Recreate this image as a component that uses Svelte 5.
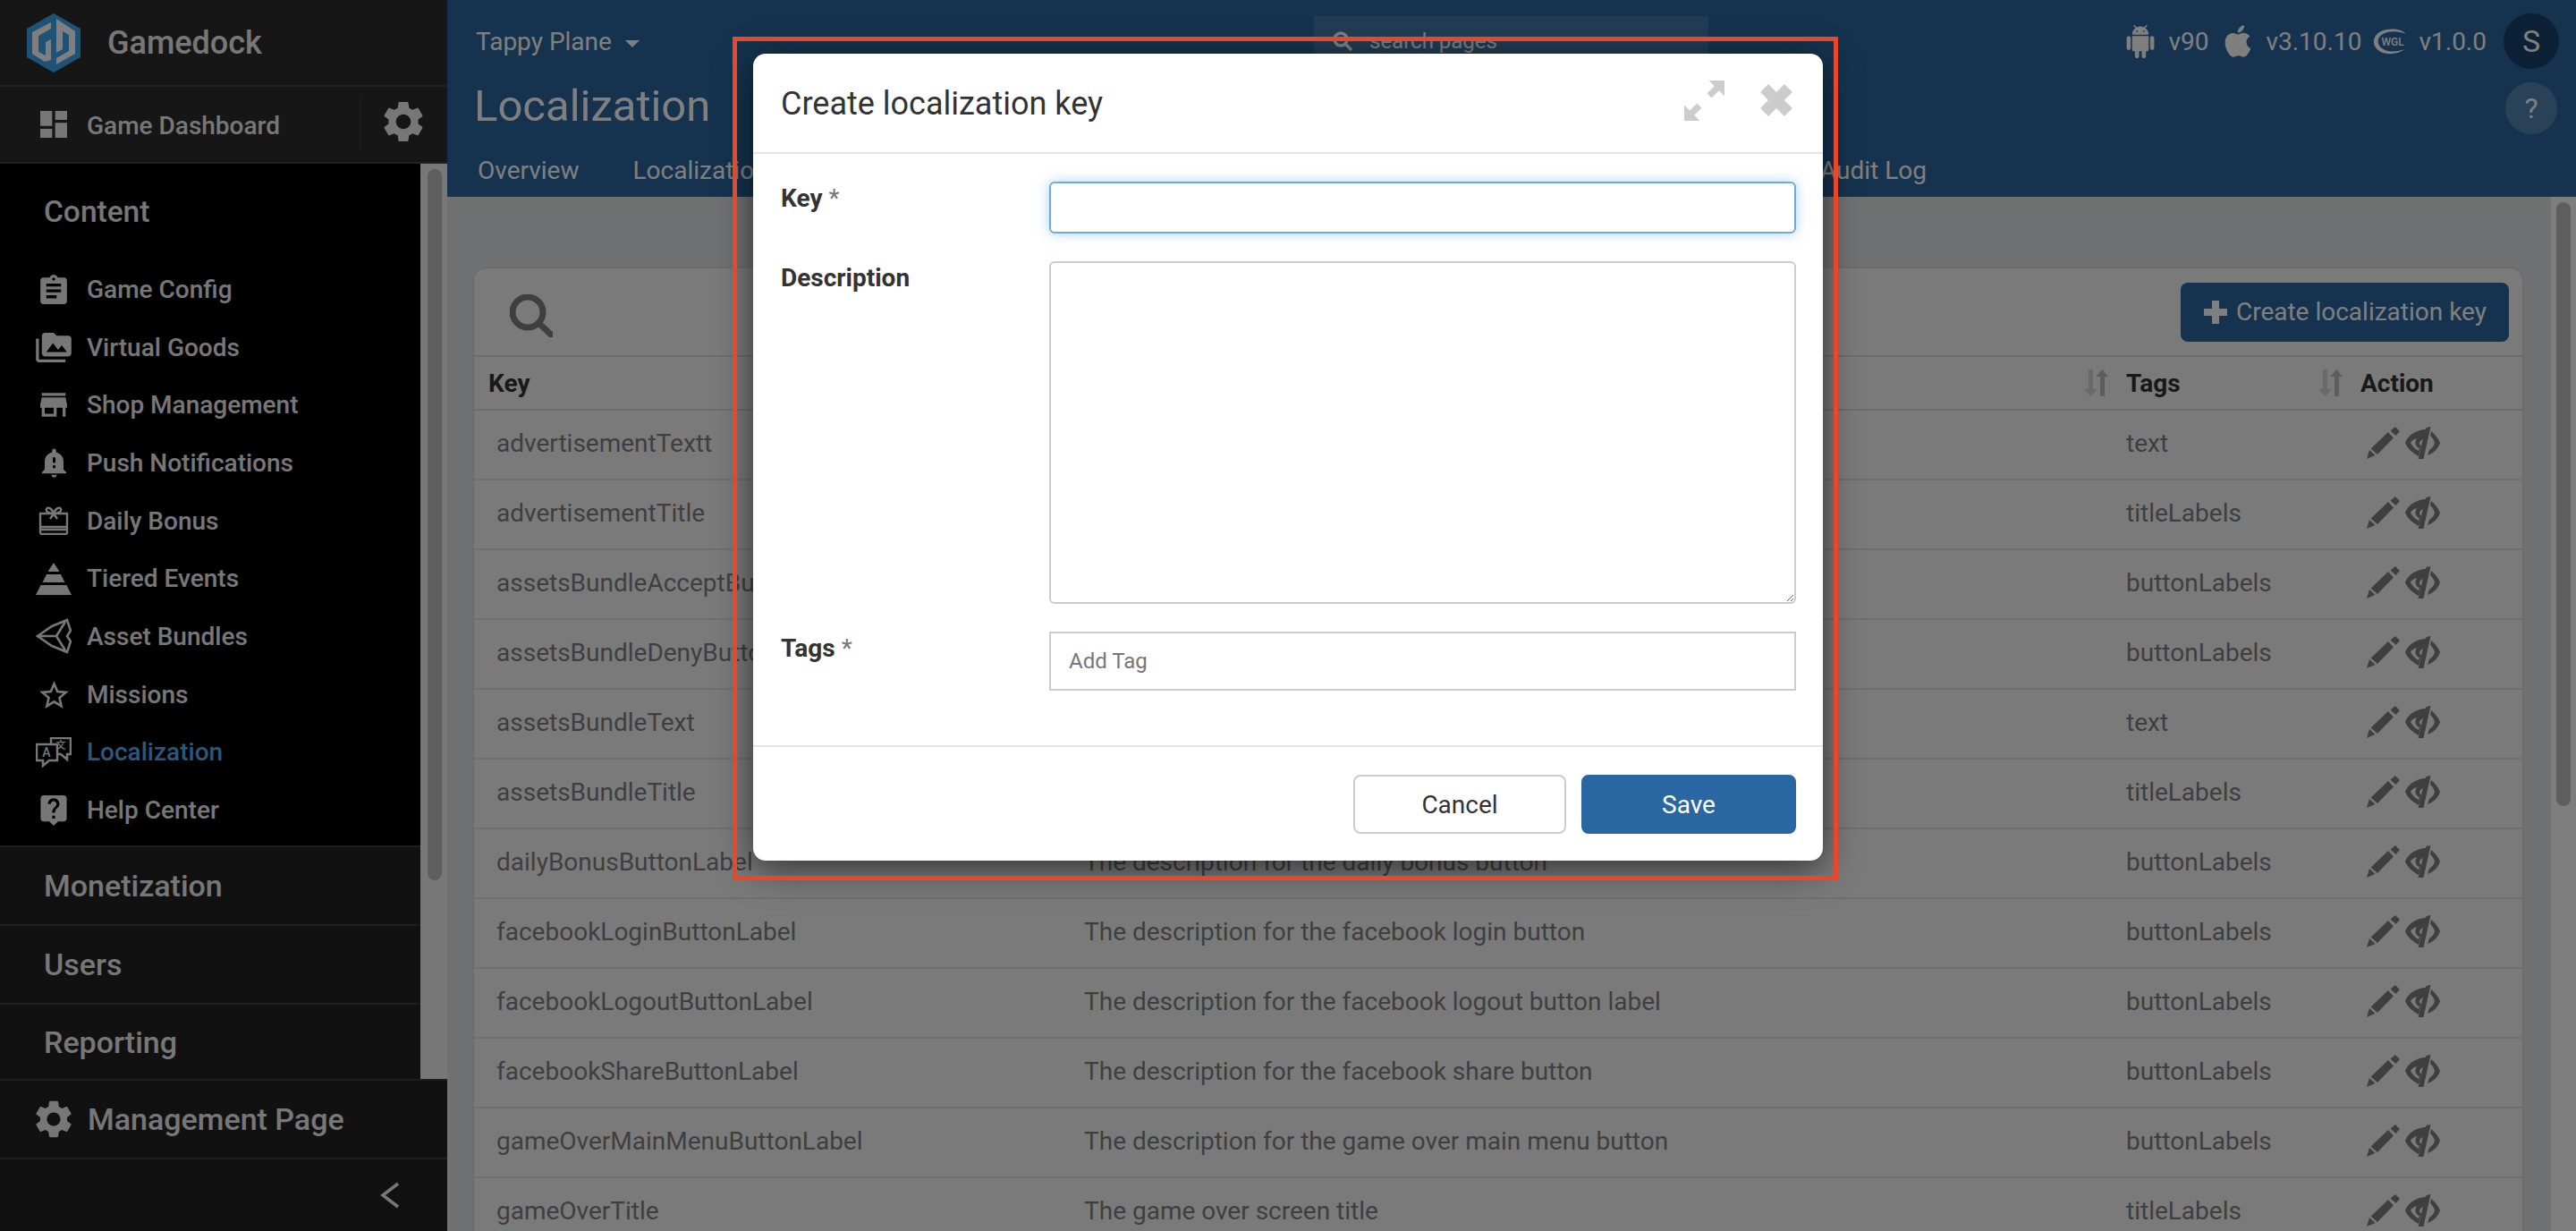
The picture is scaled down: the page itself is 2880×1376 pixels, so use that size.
<script>
  const nav = [
    { label: 'Game Config', vb: '3 1 18 20', d: 'M19 3h-4.18C14.4 1.84 13.3 1 12 1c-1.3 0-2.4.84-2.82 2H5c-1.1 0-2 .9-2 2v14c0 1.1.9 2 2 2h14c1.1 0 2-.9 2-2V5c0-1.1-.9-2-2-2zm-7 0c.55 0 1 .45 1 1s-.45 1-1 1-1-.45-1-1 .45-1 1-1zm2 14H7v-2h7v2zm3-4H7v-2h10v2zm0-4H7V7h10v2z', w: 30, h: 33 },
    { label: 'Virtual Goods', vb: '0 2 24 20', d: 'M2 6H0v5h.01L0 20c0 1.1.9 2 2 2h18v-2H2V6zm20-2h-8l-2-2H6c-1.1 0-1.99.9-1.99 2L4 16c0 1.1.9 2 2 2h16c1.1 0 2-.9 2-2V6c0-1.1-.9-2-2-2zM7 15l4.500-6 3.500 4.510 2.500-3.010L21 15H7z', w: 40, h: 33 },
    { label: 'Shop Management', vb: '3 4 18 16', d: 'M20 4H4v2h16V4zm1 10v-2l-1-5H4l-1 5v2h1v6h10v-6h4v6h2v-6h1zm-9 4H6v-4h6v4z', w: 30, h: 27 },
    { label: 'Push Notifications', vb: '3 1.5 18 21.5', d: 'M12 23c1.100 0 1.990-.89 1.990-1.990h-3.980c0 1.100.89 1.990 1.990 1.990zm7-6v-6c0-3.350-2.360-6.150-5.500-6.830V3c0-.83-.67-1.500-1.500-1.500s-1.500.67-1.500 1.500v1.170C7.360 4.850 5 7.650 5 11v6l-2 2v1h18v-1l-2-2zm-6-1h-2v-2h2v2zm0-4h-2V8h2v4z', w: 27, h: 33 },
    { label: 'Daily Bonus', vb: '0 0 34 32', stroke: 2.4, d: 'M2 8h30v21a2 2 0 0 1-2 2H4a2 2 0 0 1-2-2z M2 23h30 M2 26h30 M17 8C12 8 8 6 9 3C10 0 15 2 17 8C19 2 24 0 25 3C26 6 22 8 17 8M17 8l-4 6M17 8l4 6', w: 34, h: 32 },
    { label: 'Tiered Events', vb: '0 0 40 36', d: 'M20 0l6.500 10h-13zM12 13h16l4.500 9h-25zM5.500 25h29l5.500 11H0z', w: 40, h: 36 },
    { label: 'Asset Bundles', vb: '0 0 40 40', stroke: 2.6, d: 'M2 20L18 9 35 2l4 12-4 6 4 6-4 12-17-7zM2 20h21M23 20l10-16M23 20l10 16', w: 40, h: 40 },
    { label: 'Missions', vb: '2 2 20 19', d: 'M22 9.240l-7.190-.62L12 2 9.190 8.630 2 9.240l5.460 4.730L5.820 21 12 17.270 18.180 21l-1.630-7.030L22 9.240zM12 15.400l-3.760 2.270 1-4.280-3.320-2.880 4.380-.38L12 6.100l1.710 4.040 4.380.38-3.320 2.880 1 4.280L12 15.400z', w: 33, h: 31 },
    { label: 'Localization', translate: true, active: true },
    { label: 'Help Center', vb: '3 2 18 21', d: 'M19 2H5c-1.110 0-2 .9-2 2v14c0 1.100.89 2 2 2h4l3 3 3-3h4c1.100 0 2-.9 2-2V4c0-1.100-.9-2-2-2zm-6 16h-2v-2h2v2zm2.070-7.750l-.9.92C13.450 11.900 13 12.500 13 14h-2v-.5c0-1.100.45-2.100 1.170-2.830l1.240-1.260c.37-.36.59-.86.59-1.410 0-1.100-.9-2-2-2s-2 .9-2 2H8c0-2.210 1.790-4 4-4s4 1.790 4 4c0 .88-.36 1.680-.93 2.250z', w: 30, h: 34 }
  ];

  const gear = 'M19.14 12.94c.04-.3.06-.61.06-.94 0-.32-.02-.64-.07-.94l2.03-1.58c.18-.14.23-.41.12-.61l-1.92-3.32c-.12-.22-.37-.29-.59-.22l-2.39.96c-.5-.38-1.03-.7-1.62-.94l-.36-2.54c-.04-.24-.24-.41-.48-.41h-3.84c-.24 0-.43.17-.47.41l-.36 2.54c-.59.24-1.13.57-1.62.94l-2.39-.96c-.22-.08-.47 0-.59.22L2.74 8.87c-.12.21-.08.47.12.61l2.03 1.58c-.05.3-.09.63-.09.94s.02.64.07.94l-2.03 1.58c-.18.14-.23.41-.12.61l1.92 3.32c.12.22.37.29.59.22l2.39-.96c.5.38 1.03.7 1.62.94l.36 2.54c.05.24.24.41.48.41h3.84c.24 0 .44-.17.47-.41l.36-2.54c.59-.24 1.13-.56 1.62-.94l2.39.96c.22.08.47 0 .59-.22l1.92-3.32c.12-.22.07-.47-.12-.61l-2.01-1.58zM12 15.6c-1.98 0-3.6-1.62-3.6-3.6s1.62-3.6 3.6-3.6 3.6 1.62 3.6 3.6-1.62 3.6-3.6 3.6z';

  const rows = [
    ['advertisementTextt', 'The description for the advertisement text', 'text'],
    ['advertisementTitle', 'The description for the advertisement title', 'titleLabels'],
    ['assetsBundleAcceptButtonLabel', 'The description for the accept button', 'buttonLabels'],
    ['assetsBundleDenyButtonLabel', 'The description for the deny button', 'buttonLabels'],
    ['assetsBundleText', 'The description for the assets bundle text', 'text'],
    ['assetsBundleTitle', 'The description for the assets bundle title', 'titleLabels'],
    ['dailyBonusButtonLabel', 'The description for the daily bonus button', 'buttonLabels'],
    ['facebookLoginButtonLabel', 'The description for the facebook login button', 'buttonLabels'],
    ['facebookLogoutButtonLabel', 'The description for the facebook logout button label', 'buttonLabels'],
    ['facebookShareButtonLabel', 'The description for the facebook share button', 'buttonLabels'],
    ['gameOverMainMenuButtonLabel', 'The description for the game over main menu button', 'buttonLabels'],
    ['gameOverTitle', 'The game over screen title', 'titleLabels']
  ];
</script>

{#snippet sortIcon()}
  <svg class="sort" viewBox="0 0 28 30" aria-hidden="true">
    <path d="M6 0h5v22h5l-7.500 8L1 22h5z" opacity=".6" />
    <path d="M19 30h5V8h4L21.500 0 14 8h5z" />
  </svg>
{/snippet}

<div class="app">
  <aside class="sidebar">
    <div class="brand">
      <svg class="logo" viewBox="0 0 60 66" aria-hidden="true">
        <polygon points="30,0 60,17 60,49 30,66 0,49 0,17" fill="#3fa5ee" />
        <path fill="#fff" d="M27 10v7L13 25v18l8 4V32l6-3v23l-7 2-14-9V21zM33 6l21 14v25L33 57v-7l14-8V24l-7-4v20l-7 4z" />
      </svg>
      <span>Gamedock</span>
    </div>

    <div class="dash">
      <svg class="dash-icon" viewBox="3 3 18 18" aria-hidden="true"><path d="M3 13h8V3H3v10zm0 8h8v-6H3v6zm10 0h8V11h-8v10zm0-18v6h8V3h-8z" /></svg>
      <span class="dash-label">Game Dashboard</span>
      <div class="dash-gear">
        <svg viewBox="2.500 2 19 20" aria-hidden="true"><path d={gear} /></svg>
      </div>
    </div>

    <div class="side-scroll">
      <div class="side-inner">
        <section class="open-group">
          <h3>Content</h3>
          {#each nav as item}
            <div class="nav-item" class:active={item.active}>
              <span class="nav-icon">
                {#if item.translate}
                  <svg width="40" height="34" viewBox="0 0 40 34" aria-hidden="true">
                    <path class="line" d="M17 7V1h22v18h-4v6l-7-6h-3" />
                    <path class="line" d="M1 8h23v18H15l-7 6v-6H1z" />
                    <text x="12" y="22" class="glyph">A</text>
                    <text x="28" y="13" class="glyph small">文</text>
                  </svg>
                {:else if item.stroke}
                  <svg width={item.w} height={item.h} viewBox={item.vb} aria-hidden="true">
                    <path class="line" style:stroke-width={item.stroke} d={item.d} />
                  </svg>
                {:else}
                  <svg width={item.w} height={item.h} viewBox={item.vb} aria-hidden="true"><path d={item.d} /></svg>
                {/if}
              </span>
              <span>{item.label}</span>
            </div>
          {/each}
        </section>
        <div class="group g1">Monetization</div>
        <div class="group g1">Users</div>
        <div class="group g2">Reporting</div>
      </div>
      <div class="side-bar"><div class="side-thumb"></div></div>
    </div>

    <div class="manage">
      <svg viewBox="2.500 2 19 20" aria-hidden="true"><path d={gear} /></svg>
      <span>Management Page</span>
    </div>
    <div class="collapse">
      <svg viewBox="0 0 22 30" aria-hidden="true"><path d="M20 2L3 15l17 13" /></svg>
    </div>
  </aside>

  <main class="main">
    <header class="header">
      <div class="topbar">
        <div class="project">Tappy Plane <i class="caret"></i></div>
        <div class="search">
          <svg viewBox="0 0 24 24" aria-hidden="true"><circle cx="10" cy="10" r="7" /><path d="M15 15l7 7" /></svg>
          <span>search pages</span>
        </div>
        <div class="versions">
          <svg class="android" viewBox="2 0 20 24" aria-hidden="true"><path d="M6 18c0 .55.45 1 1 1h1v3.500c0 .83.67 1.500 1.500 1.500s1.500-.67 1.500-1.500V19h2v3.500c0 .83.67 1.500 1.500 1.500s1.500-.67 1.500-1.500V19h1c.55 0 1-.45 1-1V8H6v10zM3.500 8C2.670 8 2 8.670 2 9.500v7c0 .83.67 1.500 1.500 1.500S5 17.330 5 16.500v-7C5 8.670 4.330 8 3.500 8zm17 0c-.83 0-1.500.67-1.500 1.500v7c0 .83.67 1.500 1.500 1.500s1.500-.67 1.500-1.500v-7c0-.83-.67-1.500-1.500-1.500zm-4.970-5.840l1.300-1.300c.2-.2.2-.51 0-.71-.2-.2-.51-.2-.71 0l-1.480 1.480C13.850 1.230 12.950 1 12 1c-.96 0-1.860.23-2.660.63L7.850.15c-.2-.2-.51-.2-.71 0-.2.2-.2.51 0 .71l1.310 1.310C6.970 3.260 6 5.010 6 7h12c0-1.990-.97-3.750-2.470-4.840zM10 5H9V4h1v1zm5 0h-1V4h1v1z" /></svg>
          <span>v90</span>
          <svg class="apple" viewBox="3.500 2 17 20" aria-hidden="true"><path d="M18.710 19.500c-.83 1.240-1.710 2.450-3.050 2.470-1.340.03-1.770-.79-3.290-.79-1.530 0-2 .77-3.270.82-1.310.05-2.300-1.320-3.140-2.530C4.250 17 2.940 12.450 4.700 9.390c.87-1.520 2.430-2.480 4.120-2.510 1.280-.02 2.500.87 3.290.87.78 0 2.260-1.070 3.810-.91.65.03 2.470.26 3.640 1.980-.09.06-2.170 1.280-2.150 3.810.03 3.020 2.650 4.030 2.680 4.040-.03.07-.42 1.440-1.380 2.830M13 3.500c.73-.83 1.940-1.460 2.940-1.500.13 1.170-.34 2.350-1.040 3.190-.69.85-1.830 1.510-2.950 1.420-.15-1.150.41-2.350 1.050-3.110z" /></svg>
          <span>v3.10.10</span>
          <svg class="wgl" viewBox="0 0 40 30" aria-hidden="true">
            <path d="M38 7C32 1 20 0 10 4 0 9-1 20 8 26c8 5 20 4 29-2-9 3-20 4-26-1C5 18 5 11 12 7c8-4 18-3 26 0z" />
            <text x="23" y="20" text-anchor="middle">WGL</text>
          </svg>
          <span>v1.0.0</span>
        </div>
        <div class="avatar">S</div>
      </div>
      <div class="titlebar">
        <h1>Localization</h1>
        <div class="help">?</div>
      </div>
      <nav class="tabs">
        <span>Overview</span>
        <span>Localization</span>
        <span>Languages</span>
        <span class="last">Audit Log</span>
      </nav>
    </header>

    <div class="content">
      <div class="content-inner">
        <div class="card">
          <div class="toolbar">
            <svg class="tool-search" viewBox="0 0 48 48" aria-hidden="true"><circle cx="20" cy="20" r="17" /><path d="M32 32l14 13" /></svg>
            <button class="create">
              <svg viewBox="0 0 26 26" aria-hidden="true"><path d="M9 0h8v9h9v8h-9v9H9v-9H0V9h9z" /></svg>
              Create localization key
            </button>
          </div>
          <div class="thead">
            <div class="th">Key</div>
            <div class="th split">Description {@render sortIcon()}</div>
            <div class="th split">Tags {@render sortIcon()}</div>
            <div class="th">Action</div>
          </div>
          {#each rows as row}
            <div class="tr">
              <div class="td first">{row[0]}</div>
              <div class="td">{row[1]}</div>
              <div class="td">{row[2]}</div>
              <div class="td acts">
                <svg class="pencil" viewBox="0 0 38 36" aria-hidden="true"><path d="M0 36l3-10 6.500 6zM4.700 24.500L24 6l6 6.500L12 31zM26.500 4.500L32 0l5 5-4.500 5z" /></svg>
                <svg class="eye" viewBox="0 0 39 36" aria-hidden="true">
                  <path d="M23.500 1l5-1-8 36h-6z" />
                  <path fill-rule="evenodd" d="M24 3C12 3 3 10 0 18c3 7 8 11 15 15l1.500-6L24 3zM13 13c-4 1-6 3-7 5 2 4 5 7 9 9l1-3c-3-1-5-4-4.500-7 .5-2 1-3 1.500-4zM20 14c-3 1-4 3-4 5 0 1 1 2 2 2z" />
                  <path d="M29 5c4 3 8 8 10 13-2 7-8 12-14 14l2-6c3-2 5-4 6-8-1-4-3-6-5-8z" />
                </svg>
              </div>
            </div>
          {/each}
        </div>
      </div>
      <div class="main-bar"><div class="main-thumb"></div></div>
    </div>
  </main>

  <div class="scrim">
    <div class="modal">
      <div class="annotation"></div>
      <div class="modal-head">
        <h2>Create localization key</h2>
        <svg class="expand" viewBox="0 0 44 44" aria-hidden="true"><path d="M44 0v17l-6-6-8 8-5-5 8-8-6-6zM0 44V27l6 6 8-8 5 5-8 8 6 6z" /></svg>
        <svg class="close" viewBox="0 0 34 34" aria-hidden="true"><path d="M9 1l8 8 8-8 8 8-8 8 8 8-8 8-8-8-8 8-8-8 8-8-8-8z" /></svg>
      </div>
      <div class="modal-body">
        <div class="form-row">
          <label for="k">Key <em>*</em></label>
          <input id="k" class="focus" type="text" />
        </div>
        <div class="form-row">
          <label for="d">Description</label>
          <textarea id="d"></textarea>
        </div>
        <div class="form-row">
          <label for="t">Tags <em>*</em></label>
          <input id="t" class="tags" type="text" placeholder="Add Tag" />
        </div>
      </div>
      <div class="modal-foot">
        <button class="btn cancel">Cancel</button>
        <button class="btn save">Save</button>
      </div>
    </div>
  </div>
</div>

<style>
  :global(body) {
    margin: 0;
    overflow: hidden;
    font-family: Roboto, "Liberation Sans", sans-serif;
  }

  .app {
    position: relative;
    display: grid;
    grid-template-columns: 500px 1fr;
    height: 1376px;
    overflow: hidden;
    background: #e0e3e7;
  }

  .sidebar {
    display: flex;
    flex-direction: column;
    height: 1376px;
    background: #222;
    color: #eee;
    fill: currentColor;
  }

  .brand {
    display: flex;
    align-items: center;
    height: 96px;
    padding-left: 30px;
    gap: 30px;
    background: #2c2c2c;
    border-bottom: 2px solid #444;
    font-size: 36px;
    font-weight: 500;
  }

  .logo {
    width: 60px;
    height: 66px;
  }

  .dash {
    display: flex;
    align-items: center;
    height: 84px;
    padding-left: 45px;
    background: #2c2c2c;
    border-bottom: 2px solid #444;
    font-size: 28px;
    font-weight: 500;
  }

  .dash-icon {
    width: 30px;
    height: 30px;
    margin-right: 22px;
  }

  .dash-label {
    flex: 1;
    padding-top: 2px;
  }

  .dash-gear {
    display: flex;
    align-items: center;
    justify-content: center;
    width: 98px;
    height: 64px;
    padding-right: 3px;
    border-left: 2px solid #3a3a3a;
    box-sizing: border-box;
  }

  .dash-gear svg {
    width: 44px;
    height: 46px;
    margin-top: -6px;
  }

  .side-scroll {
    flex: none;
    display: flex;
    height: 1023px;
  }

  .side-inner {
    flex: 1;
    min-width: 0;
  }

  .open-group {
    height: 762px;
    background: #000;
  }

  .open-group h3 {
    display: flex;
    align-items: center;
    height: 108px;
    margin: 0;
    padding-left: 49px;
    padding-bottom: 1px;
    box-sizing: border-box;
    font-size: 33.5px;
    font-weight: 500;
  }

  .nav-item {
    display: flex;
    align-items: center;
    height: 64.7px;
    font-size: 28px;
    font-weight: 500;
  }

  .nav-item.active {
    color: #4fb2ff;
  }

  .nav-icon {
    display: flex;
    align-items: center;
    justify-content: center;
    width: 40px;
    margin: 0 17px 0 40px;
    color: #eee;
  }

  .line {
    fill: none;
    stroke: currentColor;
    stroke-width: 2.500;
  }

  .glyph {
    font-size: 14px;
    font-weight: 500;
    text-anchor: middle;
    fill: currentColor;
  }

  .glyph.small {
    font-size: 11px;
    font-family: "Noto Sans CJK SC", sans-serif;
  }

  .group {
    display: flex;
    align-items: center;
    padding-left: 49px;
    border-top: 2px solid #3c3c3c;
    box-sizing: border-box;
    font-size: 34px;
    font-weight: 500;
  }

  .g1 {
    height: 88px;
  }

  .g2 {
    height: 85px;
  }

  .side-bar {
    width: 30px;
    background: #f0f0f0;
    padding-top: 6px;
    box-sizing: border-box;
  }

  .side-thumb {
    width: 16px;
    height: 795px;
    margin-left: 8px;
    border-radius: 8px;
    background: #bcbcbc;
  }

  .manage {
    display: flex;
    align-items: center;
    flex: none;
    height: 86px;
    gap: 18px;
    padding-left: 40px;
    border-top: 2px solid #3c3c3c;
    font-size: 34px;
    font-weight: 500;
  }

  .manage svg {
    width: 40px;
    height: 42px;
  }

  .collapse {
    display: flex;
    align-items: center;
    justify-content: flex-end;
    flex: none;
    height: 80px;
    padding-right: 53px;
    border-top: 2px solid #3c3c3c;
  }

  .collapse svg {
    width: 22px;
    height: 30px;
    fill: none;
    stroke: #eee;
    stroke-width: 3.500;
  }

  .main {
    display: flex;
    flex-direction: column;
    min-width: 0;
    height: 1376px;
  }

  .header {
    height: 220px;
    flex: none;
    background: #2a669e;
    color: #fff;
  }

  .topbar {
    display: flex;
    align-items: center;
    height: 92px;
    padding: 0 19px 0 32px;
    box-sizing: border-box;
  }

  .project {
    flex: 0 0 937px;
    font-size: 28px;
  }

  .caret {
    display: inline-block;
    margin-left: 8px;
    vertical-align: 3px;
    border-left: 8px solid transparent;
    border-right: 8px solid transparent;
    border-top: 8px solid #fff;
  }

  .search {
    display: flex;
    align-items: center;
    flex: 0 0 441px;
    height: 56px;
    padding-left: 20px;
    gap: 18px;
    box-sizing: border-box;
    background: rgba(255, 255, 255, 0.12);
    font-size: 24px;
  }

  .search svg {
    width: 24px;
    height: 26px;
    fill: none;
    stroke: #fff;
    stroke-width: 3.500;
  }

  .versions {
    display: flex;
    align-items: center;
    margin-left: auto;
    margin-right: 19px;
    font-size: 28px;
    fill: #fff;
  }

  .android {
    width: 32px;
    height: 37px;
    margin-right: 15px;
  }

  .apple {
    width: 30px;
    height: 36px;
    margin: 0 16px 0 18px;
  }

  .wgl {
    width: 40px;
    height: 30px;
    margin: 0 12px;
  }

  .wgl text {
    font-size: 12px;
    font-weight: 500;
  }

  .avatar {
    display: flex;
    align-items: center;
    justify-content: center;
    width: 62px;
    height: 62px;
    border-radius: 50%;
    background: #18426c;
    font-size: 34px;
  }

  .titlebar {
    display: flex;
    align-items: center;
    justify-content: space-between;
    height: 58px;
    padding: 0 21px 0 30px;
  }

  h1 {
    margin: 0 0 5px;
    font-size: 49px;
    font-weight: 400;
  }

  .help {
    display: flex;
    align-items: center;
    justify-content: center;
    width: 58px;
    height: 58px;
    border-radius: 50%;
    background: rgba(255, 255, 255, 0.2);
    font-size: 32px;
  }

  .tabs {
    display: flex;
    align-items: center;
    gap: 60px;
    height: 60px;
    margin-top: 10px;
    padding: 0 726px 0 34px;
    font-size: 28px;
  }

  .last {
    margin-left: auto;
  }

  .content {
    display: flex;
    flex: 1;
    min-height: 0;
    overflow: hidden;
  }

  .content-inner {
    flex: 1;
    min-width: 0;
    padding: 80px 32px 0 30px;
  }

  .card {
    background: #f5f5f5;
    border-radius: 14px 14px 0 0;
    box-shadow: 0 0 4px rgba(0, 0, 0, 0.12);
  }

  .toolbar {
    display: flex;
    align-items: center;
    justify-content: space-between;
    height: 97px;
    padding: 0 15px 0 40px;
    border-bottom: 2px solid #d8d8d8;
  }

  .tool-search {
    width: 48px;
    height: 48px;
    margin-top: 8px;
    fill: none;
    stroke: #7e7e7e;
    stroke-width: 7;
    stroke-linecap: round;
  }

  .create {
    display: flex;
    align-items: center;
    gap: 10px;
    height: 66px;
    padding: 0 25px 0 26px;
    border: 0;
    border-radius: 8px;
    background: #2a669e;
    color: #fff;
    font: 400 28px Roboto, sans-serif;
  }

  .create svg {
    width: 26px;
    height: 26px;
    fill: #fff;
  }

  .thead,
  .tr {
    display: grid;
    grid-template-columns: 682px 1165px 262px 181px;
    align-items: center;
  }

  .thead {
    height: 58px;
    border-bottom: 2px solid #d8d8d8;
  }

  .th {
    font-size: 28px;
    font-weight: 700;
    color: #333;
  }

  .th:first-child {
    padding-left: 16px;
  }

  .split {
    display: flex;
    align-items: center;
    justify-content: space-between;
    padding-right: 20px;
  }

  .sort {
    width: 28px;
    height: 30px;
    fill: #bbb;
  }

  .tr {
    height: 72px;
    padding-bottom: 4px;
    border-bottom: 2px solid #dfdfdf;
    color: #7e7e7e;
    font-size: 28px;
  }

  .first {
    padding-left: 25px;
  }

  .acts {
    display: flex;
    align-items: center;
    gap: 5px;
    padding-left: 7px;
  }

  .pencil {
    width: 38px;
    height: 36px;
    fill: #7e7e7e;
  }

  .eye {
    width: 39px;
    height: 36px;
    fill: #7e7e7e;
  }

  .main-bar {
    width: 28px;
    flex: none;
    background: #fdfdfd;
    padding-top: 6px;
    box-sizing: border-box;
  }

  .main-thumb {
    width: 16px;
    height: 675px;
    margin-left: 6px;
    border-radius: 8px;
    background: #bcbcbc;
  }

  .scrim {
    position: absolute;
    inset: 0;
    display: flex;
    justify-content: center;
    align-items: flex-start;
    padding-top: 60px;
    box-sizing: border-box;
    background: rgba(0, 0, 0, 0.5);
  }

  .modal {
    position: relative;
    width: 1196px;
    border-radius: 14px;
    background: #fff;
    box-shadow: 0 8px 40px rgba(0, 0, 0, 0.6);
    color: #333;
  }

  .annotation {
    position: absolute;
    inset: -19px -17px -22px -23px;
    border: 5px solid #e9472a;
    pointer-events: none;
  }

  .modal-head {
    display: flex;
    align-items: center;
    height: 110px;
    padding: 0 33px 0 31px;
    border-bottom: 2px solid #e5e5e5;
  }

  h2 {
    flex: 1;
    margin: 0;
    padding-top: 2px;
    font-size: 36px;
    font-weight: 400;
  }

  .expand {
    width: 45px;
    height: 45px;
    margin-bottom: 6px;
    fill: #ccc;
  }

  .close {
    width: 38px;
    height: 38px;
    margin: 0 0 6px 39px;
    fill: #ccc;
  }

  .modal-body {
    display: flex;
    flex-direction: column;
    gap: 31px;
    padding: 31px 30px 61px 31px;
    border-bottom: 2px solid #e5e5e5;
  }

  .form-row {
    display: grid;
    grid-template-columns: 300px 1fr;
    align-items: start;
  }

  label {
    padding-top: 2px;
    font-size: 28px;
    font-weight: 700;
    color: #333;
  }

  label em {
    font-style: normal;
    font-weight: 400;
    color: #777;
  }

  input,
  textarea {
    display: block;
    width: 100%;
    box-sizing: border-box;
    border: 2px solid #ccc;
    border-radius: 6px;
    background: #fff;
    outline: none;
    font: 400 24px Roboto, sans-serif;
  }

  .focus {
    height: 58px;
    border-color: #6fa9de;
    box-shadow: 0 0 14px rgba(102, 175, 233, 0.55);
  }

  textarea {
    height: 383px;
  }

  .tags {
    height: 66px;
    padding: 0 20px;
    border-radius: 0;
  }

  .tags::placeholder {
    color: #777;
  }

  .modal-foot {
    display: flex;
    justify-content: flex-end;
    gap: 17px;
    padding: 31px 30px 30px 31px;
  }

  .btn {
    height: 66px;
    border-radius: 8px;
    font: 400 28px Roboto, sans-serif;
  }

  .cancel {
    width: 238px;
    border: 2px solid #ccc;
    background: #fff;
    color: #333;
  }

  .save {
    width: 240px;
    border: 2px solid #2a67a2;
    background: #2a67a2;
    color: #fff;
  }
</style>
